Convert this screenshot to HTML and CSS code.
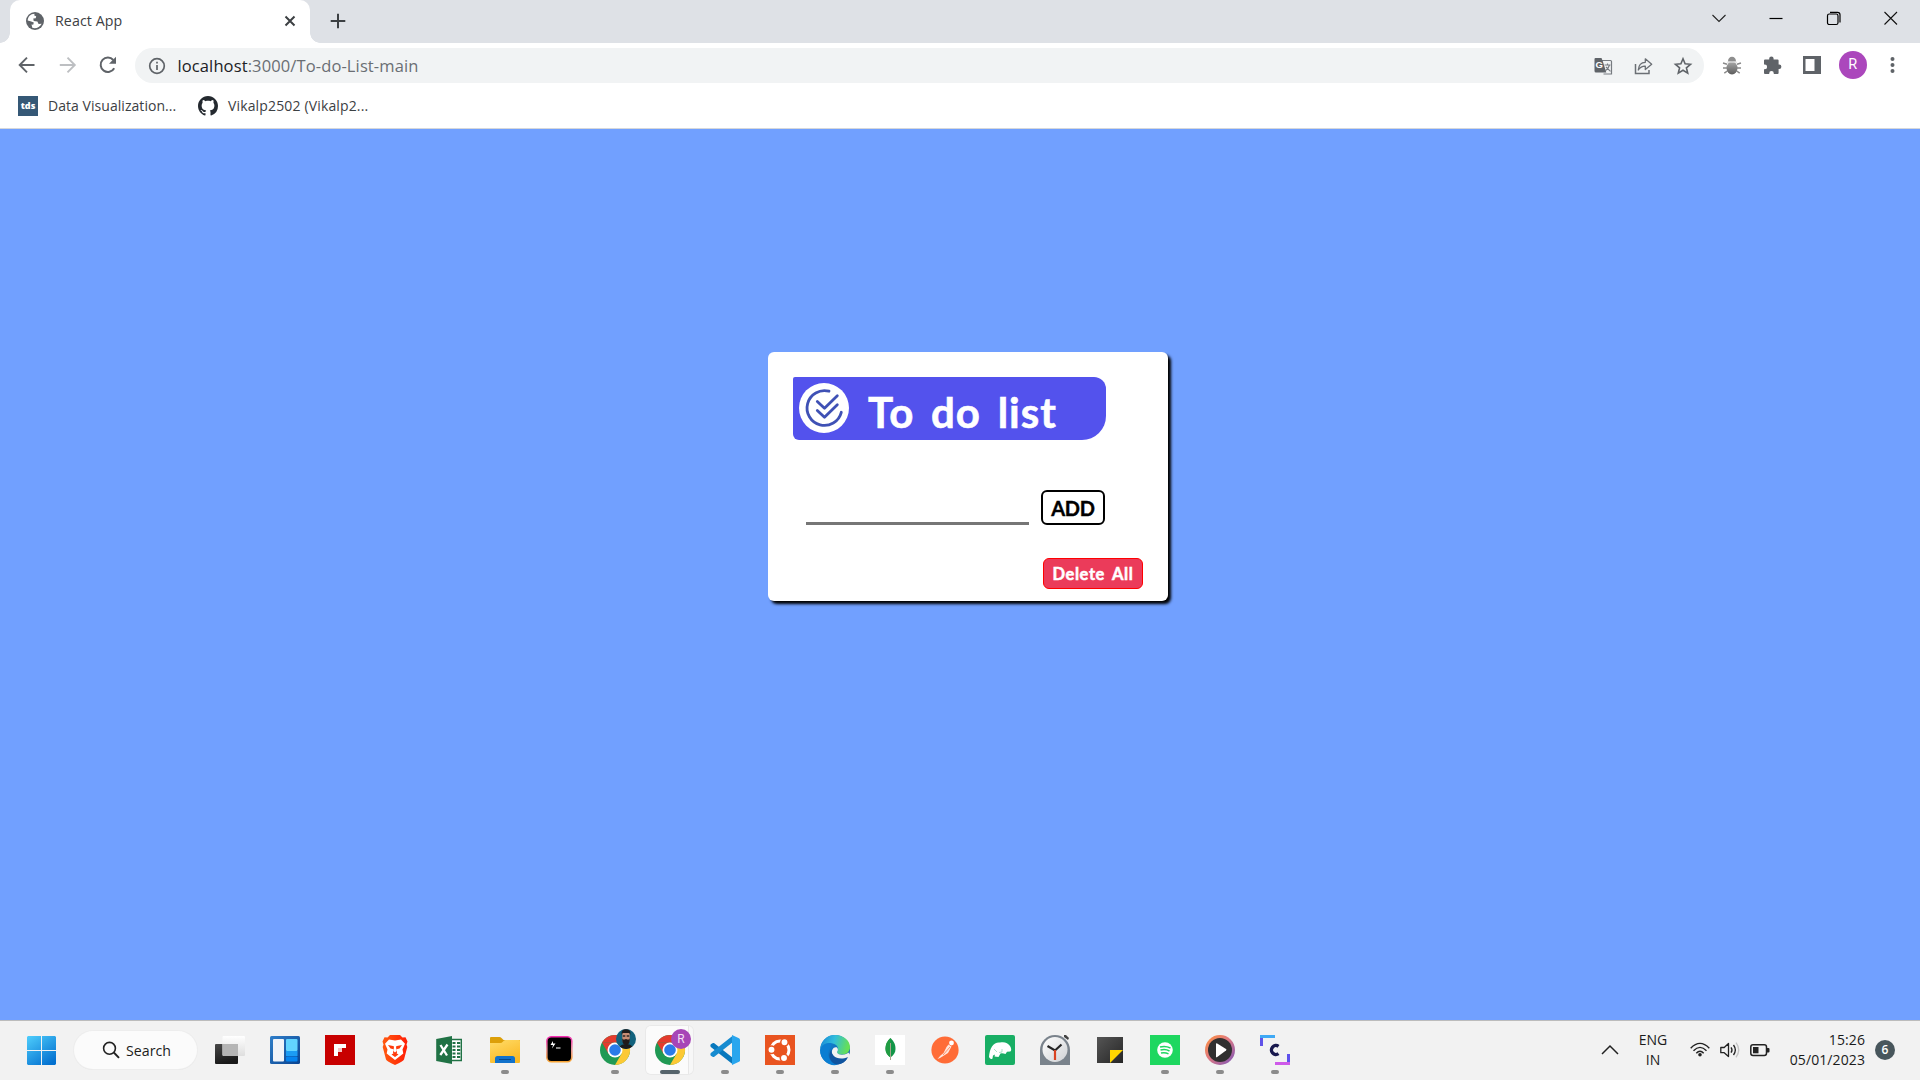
FILE: index.html
```html
<!DOCTYPE html>
<html lang="en">
<head>
<meta charset="utf-8">
<title>React App</title>
<link rel="stylesheet" href="styles.css">
</head>
<body>
<div class="screen">
  <header class="tabstrip">
    <div class="tab">
      <svg class="i20" viewBox="0 0 20 20"><circle cx="10" cy="10" r="9" fill="#5f6368"/><path d="M9.500 2.700C5.500 2.800 2.800 6 2.700 9.400L5.500 10.300 8.800 11.400 8.200 13.800 6.500 13.600 7.300 16.800C10.800 18 15 16.200 16.700 12.700L13.600 12.900 12.400 10.500 8.700 9.900 8.300 7.500 10.700 7.200 11.200 5.200 9.300 4.500Z" fill="#fff"/></svg>
      <span class="tab-title">React App</span>
      <svg class="tab-close" viewBox="0 0 12 12"><path d="M1.500 1.500l9 9M10.500 1.500l-9 9" stroke="#3c4043" stroke-width="2"/></svg>
    </div>
    <svg class="new-tab" viewBox="0 0 16 16"><path d="M8 .7v14.600M.7 8h14.600" stroke="#3c4043" stroke-width="2"/></svg>
    <div class="window-controls">
      <svg viewBox="0 0 16 16"><path d="M1.500 5l6.500 6.500L14.500 5" fill="none" stroke="#222" stroke-width="1.100"/></svg>
      <svg viewBox="0 0 16 16"><path d="M1.500 8.500h13" stroke="#000" stroke-width="1.200"/></svg>
      <svg viewBox="0 0 16 16"><rect x="1.500" y="4" width="10.500" height="10.500" rx="1.800" fill="none" stroke="#000" stroke-width="1.200"/><path d="M4 2.300h7.500a2.500 2.500 0 0 1 2.500 2.500V12.500" fill="none" stroke="#000" stroke-width="1.200"/></svg>
      <svg viewBox="0 0 16 16"><path d="M1.500 2l12.500 12.500M14 2L1.500 14.500" stroke="#111" stroke-width="1.100"/></svg>
    </div>
  </header>

  <nav class="toolbar">
    <div class="nav-buttons">
      <svg class="i20" viewBox="0 0 20 20"><path d="M17.500 10H3.200M10 2.700L2.700 10l7.300 7.300" fill="none" stroke="#5f6368" stroke-width="1.900"/></svg>
      <svg class="i20" viewBox="0 0 20 20"><path d="M1.800 10H16.500M9.500 2.700l7.300 7.300-7.300 7.300" fill="none" stroke="#bdbfc2" stroke-width="1.900"/></svg>
      <svg class="i20" viewBox="0 0 20 20"><path d="M16.200 13.200A7.200 7.200 0 1 1 15.300 5" fill="none" stroke="#5f6368" stroke-width="2"/><path d="M18 1.800v7H11z" fill="#5f6368"/></svg>
    </div>
    <div class="omnibox">
      <svg class="i20" viewBox="0 0 20 20"><circle cx="10" cy="10" r="7.300" fill="none" stroke="#5f6368" stroke-width="1.700"/><path d="M10 9v5M10 5.700v1.900" stroke="#5f6368" stroke-width="1.700"/></svg>
      <span class="url"><b>localhost</b>:3000/To-do-List-main</span>
      <div class="omni-actions">
        <svg class="i20" viewBox="0 0 20 20"><path d="M8 4.500h9.500a1 1 0 0 1 1 1V18h-8" fill="none" stroke="#777b80" stroke-width="1.200"/><path d="M2.500 2h6l1.200 3 3.600 11.500H3a1.500 1.500 0 0 1-1.500-1.500V3a1 1 0 0 1 1-1z" fill="#5f6368"/><path d="M11.500 9h6M14.500 7.500V9M16.500 9q-1 4-4.500 6M13 11l4.500 4.300" stroke="#777b80" stroke-width="1.100" fill="none"/><text x="2.400" y="12" class="g">G</text></svg>
        <svg class="i20" viewBox="0 0 20 20"><path d="M2.500 8v9.500h13.500v-3.500" fill="none" stroke="#6b6f74" stroke-width="1.500"/><path d="M5.300 14c.3-5 2.800-7.600 7-7.700V2.800L18.700 8.300 12.300 13.500V10.200C9 10 7 11.500 5.300 14z" fill="none" stroke="#6b6f74" stroke-width="1.300" stroke-linejoin="round"/></svg>
        <svg class="i20" viewBox="0 0 20 20"><path d="M10 2.800l2.100 5 5.400.5-4.100 3.500 1.300 5.300L10 14.300l-4.700 2.800 1.300-5.300-4.100-3.500 5.400-.5z" fill="none" stroke="#5f6368" stroke-width="1.600"/></svg>
      </div>
    </div>
    <div class="extensions">
      <svg class="i20" viewBox="0 0 20 20"><defs><linearGradient id="bug" x2="0" y2="1"><stop stop-color="#aaa"/><stop offset="1" stop-color="#5c5c5c"/></linearGradient></defs><path d="M1 8l4 1.200M1 13h4M2.300 18.200L6 15.500M19 8l-4 1.200M19 13h-4M17.700 18.200L14 15.500" stroke="#8a8a8a" stroke-width="1.500"/><path d="M6 6.500a4 4.800 0 0 1 8 0z" fill="#8e8e8e"/><ellipse cx="10" cy="13" rx="5.500" ry="6.500" fill="url(#bug)"/><path d="M5 7.200h10" stroke="#ddd"/></svg>
      <svg class="i20" viewBox="0 0 20 20"><path d="M3 4.500h4.200V3.600a2.200 2.200 0 0 1 4.400 0v.9h4a1 1 0 0 1 1 1v4h.6a2.200 2.200 0 0 1 0 4.400h-.6v4.200a1 1 0 0 1-1 1h-3.800v-.7a2.300 2.300 0 0 0-4.600 0v.7H3a1 1 0 0 1-1-1v-3.900h.8a2.300 2.300 0 0 0 0-4.600H2V5.500a1 1 0 0 1 1-1z" fill="#5f6368"/></svg>
      <svg class="i20" viewBox="0 0 20 20"><path d="M1 1h18v18H1zM3.500 4v12h9V4z" fill="#5f6368" fill-rule="evenodd"/></svg>
      <span class="profile">R</span>
      <svg class="i20" viewBox="0 0 20 20" fill="#5f6368"><circle cx="9.500" cy="4" r="2"/><circle cx="9.500" cy="10" r="2"/><circle cx="9.500" cy="16" r="2"/></svg>
    </div>
  </nav>

  <nav class="bookmarks">
    <a class="bookmark"><span class="tds">tds</span><span class="bm-data">Data Visualization...</span></a>
    <a class="bookmark"><svg class="i20" viewBox="0 0 16 16"><path fill="#24292f" d="M8 0C3.580 0 0 3.580 0 8c0 3.540 2.290 6.530 5.470 7.590.4.070.55-.17.55-.38 0-.19-.010-.82-.010-1.490-2.010.37-2.530-.49-2.690-.94-.09-.23-.48-.94-.82-1.130-.28-.15-.68-.52-.010-.53.63-.010 1.080.58 1.230.82.72 1.210 1.870.87 2.330.66.070-.52.28-.87.51-1.070-1.780-.2-3.640-.89-3.640-3.950 0-.87.31-1.590.82-2.150-.080-.2-.36-1.020.080-2.120 0 0 .67-.21 2.200.82.64-.18 1.320-.27 2-.27s1.360.09 2 .27c1.530-1.040 2.200-.82 2.200-.82.44 1.100.16 1.920.080 2.120.51.56.82 1.270.82 2.150 0 3.070-1.870 3.750-3.650 3.950.29.25.54.73.54 1.480 0 1.070-.010 1.930-.010 2.200 0 .21.15.46.55.38A8.010 8.010 0 0 0 16 8c0-4.420-3.580-8-8-8z"/></svg><span class="bm-git">Vikalp2502 (Vikalp2...</span></a>
  </nav>

  <main class="page">
    <section class="card">
      <div class="banner">
        <svg class="logo" viewBox="0 0 50 50"><circle cx="25" cy="25" r="25" fill="#fff"/><g fill="none" stroke="#3f51b5" stroke-width="2.800" stroke-linecap="round" stroke-linejoin="round"><path d="M30 8.200A17.400 17.400 0 1 0 42.300 29.300"/><path d="M18.300 18.500L25.500 25.300 38.300 12.800"/><path d="M18.300 27.500L25.500 34.300 38.300 21.800"/></g></svg>
        <h1>To do list</h1>
      </div>
      <div class="entry"><input class="item" type="text" aria-label="New item"><button class="add">ADD</button></div>
      <button class="delete">Delete All</button>
    </section>
  </main>

  <footer class="taskbar">
    <svg class="start" viewBox="0 0 29 29"><defs><linearGradient id="win" gradientUnits="userSpaceOnUse" x1="2" y1="0" x2="22" y2="29"><stop stop-color="#4ccbfb"/><stop offset="1" stop-color="#0471d0"/></linearGradient></defs><path d="M1 0h13v14H0V1zM15 0h13l1 1v13H15zM0 15h14v14H1l-1-1zM15 15h14v13l-1 1H15z" fill="url(#win)"/></svg>
    <div class="search"><svg viewBox="0 0 18 18"><circle cx="7.500" cy="7.300" r="5.900" fill="none" stroke="#222" stroke-width="1.600"/><path d="M11.800 11.500l5.200 5.300" stroke="#222" stroke-width="1.900"/></svg><span>Search</span></div>
    <div class="apps">
      <div class="app"><svg viewBox="0 0 30 30"><defs><linearGradient id="tv" x2=".3" y2="1"><stop stop-color="#484848"/><stop offset="1" stop-color="#191919"/></linearGradient><linearGradient id="tl" x2="0" y2="1"><stop stop-color="#fff"/><stop offset="1" stop-color="#dedede"/></linearGradient></defs><rect x="0" y="9" width="23" height="20" rx="1" fill="url(#tv)"/><rect x="7.500" y="1" width="22.500" height="20" rx="1" fill="url(#tl)"/><path d="M7.500 9H23v12H8.500l-1-1z" fill="#b5b5b5"/></svg></div>
      <div class="app"><svg viewBox="0 0 30 30"><defs><linearGradient id="wg" x2="1" y2="1"><stop stop-color="#2f7fca"/><stop offset="1" stop-color="#0a4390"/></linearGradient></defs><rect y="1" width="30" height="28" rx="1.500" fill="url(#wg)"/><rect x="3" y="4" width="11" height="22.500" rx="1" fill="#f0f3f8"/><rect x="16" y="4" width="11.500" height="12" rx="1" fill="#62d5ff"/><path d="M16 16h11.500v5H16z" fill="#1b9cf4"/><rect x="16" y="21.500" width="11.500" height="5" rx="1" fill="#0583ee"/></svg></div>
      <div class="app"><svg viewBox="0 0 30 30"><path fill="#c80000" d="M0 0h30v30H0z"/><path fill="#fff" d="M9 9h12v4H17v4h-4v4H9z"/><path fill="#f5c5c5" d="M13 13h4v4h-4z"/></svg></div>
      <div class="app"><svg viewBox="0 0 30 30"><defs><linearGradient id="br"><stop stop-color="#ff5a10"/><stop offset="1" stop-color="#ff1d06"/></linearGradient></defs><path d="M10 0h10l2.500 2.600 3-.3 2 4.200-1 3 .8 2.500-3.300 12.500q-.6 1.500-9 5.500-8.400-4-9-5.500L2.700 12l.8-2.500-1-3 2-4.200 3 .3z" fill="url(#br)"/><path d="M9 4.500l6 1 6-1 4 4.200-2.500 5.800.8 4-2.800 2.200L15 25l-5.500-4.300-2.800-2.200.8-4L5 8.700z" fill="#fff"/><path d="M8 10l5 .9 1 .6-.5 4.500 1.500 1.500 1.500-1.500-.5-4.500 1-.6 5-.9-2.500 3.600-3 .6.500 3.800-2 1.500-2-1.500.5-3.800-3-.6zM11.500 19.500L15 17.500l3.500 2L15 22z" fill="#ff3b0c"/></svg></div>
      <div class="app"><svg viewBox="0 0 30 30"><path d="M16 4.500h10.300v21H16z" fill="#fff" stroke="#207245" stroke-width="1.400"/><path d="M17.500 8h3M22 8h3.300M17.500 11.500h3M22 11.500h3.300M17.500 15h3M22 15h3.300M17.500 18.500h3M22 18.500h3.300M17.500 22h3M22 22h3.300" stroke="#207245" stroke-width="1.900"/><path d="M1.200 4L17 1v28L1.200 26z" fill="#207245"/><path d="M5.500 10l6.500 10.500M12.500 9.500L5.300 20" stroke="#fff" stroke-width="2.300"/></svg></div>
      <div class="app open"><svg viewBox="0 0 30 30"><defs><linearGradient id="fd" x2=".5" y2="1"><stop stop-color="#ffdc69"/><stop offset="1" stop-color="#fbba26"/></linearGradient></defs><path d="M0 3q0-1 1-1h8.500q1 0 2 1l2 2H30v10H0z" fill="#dc9f09"/><path d="M0 8h10q2 0 3-1.500T15.500 5H29q1 0 1 1v21q0 1-1 1H1q-1 0-1-1z" fill="url(#fd)"/><path d="M5 28v-4.500Q5 21 7.500 21h15q2.500 0 2.500 2.500V28z" fill="#1272cb"/><path d="M9 24.500h12" stroke="#07498c"/></svg></div>
      <div class="app"><svg viewBox="0 0 30 30"><defs><linearGradient id="tm" x2="0" y2="1"><stop stop-color="#f62cb2"/><stop offset=".5" stop-color="#e99aa0"/><stop offset="1" stop-color="#f7a332"/></linearGradient></defs><rect x="1.800" y="1.800" width="25" height="25" rx="4.500" stroke="url(#tm)" stroke-width="1.600"/><path d="M8 6l-2.500 4h2.500l-1 3.500 3.500-5H8z" fill="#fff"/><path d="M11 13h4.500" stroke="#ddd" stroke-width="1.200"/></svg></div>
      <div class="app open"><svg viewBox="0 0 30 30"><defs><g id="chrome"><circle cx="15" cy="15" r="15" fill="#209954"/><path d="M2 7.500A15 15 0 0 1 28 7.500H15z" fill="#e33b2e"/><path d="M2 7.500L8.500 18.700 15 15V7.500z" fill="#e33b2e"/><path d="M28 7.500A15 15 0 0 1 15 30l6.500-11.300L19 7.500z" fill="#fcc934"/><circle cx="15" cy="15" r="7.500" fill="#fff"/><circle cx="15" cy="15" r="5.800" fill="#2a7be9"/></g></defs><use href="#chrome"/><circle cx="26" cy="4" r="10" fill="#12627d"/><path d="M19.500 11.600q2-2.300 6.500-2.600t6.500 2.600A10 10 0 0 1 19.500 11.600z" fill="#1c1c1c"/><path d="M22.300-3h7.400v8q-.7 4-3.700 4t-3.700-4z" fill="#c98d74"/><path d="M21.700 0q-1-5.700 4.300-5.700T30.300 0L29.300-2h-6.600z" fill="#201b1b"/><path d="M22.300 3.500l1.500 1.200 2.200-.6 2.200.6 1.500-1.200V6q-.7 4-3.700 4t-3.700-4z" fill="#201b1b"/><path d="M22.800 1h2.500M26.700 1h2.500" stroke="#302725" stroke-width="1.300"/></svg></div>
      <div class="app open active"><svg viewBox="0 0 30 30"><use href="#chrome"/><circle cx="26" cy="4" r="10" fill="#a745b7"/><text x="26" y="8.400" class="avatar-letter">R</text></svg></div>
      <div class="app open"><svg viewBox="0 0 30 30"><path d="M.8 9.300L3 8q.7-.3 1.300.2L23 23v6.500L.8 12q-1-1 0-2.700z" fill="#0878bd"/><path d="M.8 20.700L3 22q.7.300 1.300-.2L23 7V.5L.8 18q-1 1 0 2.700z" fill="#168bd0"/><path d="M22 0l7 3.200q1 .5 1 1.500v20.600q0 1-1 1.500L22 30z" fill="#29a6ee"/></svg></div>
      <div class="app open"><svg viewBox="0 0 30 30"><path fill="#e95420" d="M0 0h30v30H0z"/><circle cx="15" cy="15" r="9" fill="none" stroke="#fff" stroke-width="3"/><g fill="#fff" stroke="#e95420" stroke-width="1.500"><circle cx="6.500" cy="14.800" r="3.700"/><circle cx="19.500" cy="7.300" r="3.700"/><circle cx="19" cy="23" r="3.700"/></g></svg></div>
      <div class="app open"><svg viewBox="0 0 30 30"><defs><linearGradient id="eg" x2="1" y2=".2"><stop stop-color="#1686d6"/><stop offset=".5" stop-color="#31bddc"/><stop offset="1" stop-color="#65df58"/></linearGradient><linearGradient id="ed" x2="1" y2="1"><stop stop-color="#1595df"/><stop offset="1" stop-color="#0b4b9e"/></linearGradient></defs><circle cx="15" cy="15" r="15" fill="url(#ed)"/><path d="M.5 13C2 4 8 0 15 0c9 0 15 6 15 12 0 5-3.500 7.500-8 7.500-4 0-5-1.500-5-2.500 1.500-1.500 1.500-5-1-7C10 6.500 3 8 .5 13z" fill="url(#eg)"/><path d="M11 12C5 19 10 29 18 29.500 11 32 2 27 .5 18 0 10 7 8 11 8.300z" fill="#0b7ed2"/><path d="M17 17c0 1.500 2 2.700 5 2.700 3 0 5.500-1 6.500-2.200l1.500 2.500-2 3.500q-5 2.500-10 1c-5-1.700-7.500-6.500-5.500-10 1-1.800 2.500-2.500 4.500-2 1.500 1.500 1 3.500 0 4.500z" fill="#f2f2f2"/><path d="M11.500 14.500c-1 6 6.500 12 16.500 7.500-3 6-8 8-13 7-6-3-7-10-3.500-14.500z" fill="#10549f"/></svg></div>
      <div class="app open"><svg viewBox="0 0 30 30"><path d="M0 0h30v30H0z" fill="#fff"/><path d="M15.500 3c4 4 5 7 5 11 0 4-2 6-5 8.500-3-2.500-5-4.500-5-8.500 0-4 1-7 5-11z" fill="#139548"/><path d="M15.500 3q-5 4-5 11 0 5 5 8.500z" fill="#219c43"/><path d="M15.500 8v17" stroke="#a6a58b" stroke-width="1"/></svg></div>
      <div class="app"><svg viewBox="0 0 30 30"><circle cx="15" cy="15" r="13.600" fill="#ff6c37"/><circle cx="21.500" cy="8" r="2.400" fill="#fff"/><path d="M18.500 9.500l3 2-3.500 6.500-8 5-2.500 1 3-3.500 3-2.500 3-6z" fill="#ffe5db"/><path d="M13 20l7-8" stroke="#ff6c37" stroke-width=".7"/></svg></div>
      <div class="app"><svg viewBox="0 0 30 30"><rect width="30" height="30" rx="2" fill="#18ae64"/><path d="M4 22q.5-7 3-10.500c2-3 5-4.500 8-4 4-1 8 0 10 3.500 1 1.500 2 4.500.3 5.500l-3.300.2-1.500 2.300q-3-1-5-.5l-2 3.500-4-.5.500-2-2 1-.5 3q-2 1.500-3.500-1.500z" fill="#fff"/><path d="M9 14l3 3M17 14v3l-3 .5" stroke="#8bd6b0" fill="none" stroke-width=".7"/></svg></div>
      <div class="app"><svg viewBox="0 0 30 30"><defs><linearGradient id="ck" x2="1" y2="1"><stop stop-color="#fff"/><stop offset="1" stop-color="#cfd1d4"/></linearGradient></defs><path d="M24 0l2 0 3 3-1 2-4-3z" fill="#424242"/><path d="M0 15A15 15 0 0 1 30 15v15H0z" fill="#7a838c"/><circle cx="15" cy="14.500" r="12.500" fill="url(#ck)"/><path d="M7.500 11l7.500 4.500 6.500-6" stroke="#252525" stroke-width="2.200" fill="none"/><path d="M15 15v10" stroke="#d94321" stroke-width="2.200"/></svg></div>
      <div class="app"><svg viewBox="0 0 30 30"><defs><linearGradient id="sn" x2="1" y2="1"><stop stop-color="#555"/><stop offset="1" stop-color="#262626"/></linearGradient></defs><path d="M2 2h26v26H2z" fill="url(#sn)"/><path d="M15 15h13L15 28z" fill="#ffd600"/></svg></div>
      <div class="app open"><svg viewBox="0 0 30 30"><path d="M0 0h30v30H0z" fill="#1ed760"/><circle cx="15" cy="15" r="7.800" fill="#fff"/><path d="M10 12q5.500-1.500 10.500 1M10.500 15q5-1.500 9 1M11 18q4-1 7.500.8" fill="none" stroke="#1ed760" stroke-width="1.500"/></svg></div>
      <div class="app open"><svg viewBox="0 0 30 30"><defs><linearGradient id="mp" x2="1" y2="1"><stop stop-color="#ff9138"/><stop offset=".45" stop-color="#df7982"/><stop offset="1" stop-color="#7853bc"/></linearGradient></defs><circle cx="15" cy="15" r="15" fill="url(#mp)"/><circle cx="15" cy="15" r="12" fill="#303030"/><path d="M11 9q0-1.200 1.200-.5L21 14q1 .8 0 1.600L12.200 22q-1.200.7-1.200-.6z" fill="#fff"/></svg></div>
      <div class="app open"><svg viewBox="0 0 30 30"><path d="M0 10V0h15v3H3v7z" fill="#3fa9f5"/><path d="M0 3h3v8H0z" fill="#6052e8"/><path d="M15 27h12v-8h3v11H15z" fill="#ce5ae9"/><path d="M27 19h3v8h-3z" fill="#5e51ed"/><path d="M18.500 11.300A4.500 4.500 0 1 0 18.500 18.700" fill="none" stroke="#19194e" stroke-width="3.400"/></svg></div>
    </div>
    <div class="tray">
      <svg class="up" viewBox="0 0 18 10"><path d="M1 9l8-8 8 8" fill="none" stroke="#222" stroke-width="1.500"/></svg>
      <div class="lang"><span>ENG</span><span>IN</span></div>
      <div class="status">
        <svg viewBox="0 0 20 20"><g fill="none" stroke="#222" stroke-width="1.400"><path d="M.7 8.200Q10-1.500 19.300 8.200M3.500 10.800Q10 4 16.500 10.800M6.300 13.300Q10 9.300 13.700 13.300"/></g><circle cx="10" cy="14.700" r="1.800" fill="#222"/></svg>
        <svg viewBox="0 0 20 20"><path d="M.8 7.500h3.400L8.500 3.500v13L4.200 12.700H.8z" fill="none" stroke="#222" stroke-width="1.300" stroke-linejoin="round"/><path d="M11 7.300q2 2.700 0 5.400M13.500 5q3.700 5 0 10" fill="none" stroke="#222" stroke-width="1.300"/><path d="M16 2.700q5.500 7.300 0 14.600" fill="none" stroke="#c4c4c4" stroke-width="1.300"/></svg>
        <svg viewBox="0 0 20 20"><rect x=".8" y="4.800" width="15.700" height="10.700" rx="2.200" fill="none" stroke="#222" stroke-width="1.500"/><rect x="3" y="7" width="5.500" height="6.300" fill="#222"/><path d="M16.500 8h2q1 0 1 1v2.500q0 1-1 1h-2z" fill="#222"/></svg>
      </div>
      <div class="clock"><span class="time">15:26</span><span>05/01/2023</span></div>
      <span class="badge">6</span>
    </div>
  </footer>
</div>
</body>
</html>
```
FILE: styles.css
```css
* { box-sizing: border-box; }
body { margin: 0; font-family: "Segoe UI", "Open Sans", sans-serif; overflow: hidden; }
svg { display: block; flex: none; overflow: visible; }
.screen { width: 1920px; height: 1080px; display: flex; flex-direction: column; background: #fff; }
.i20 { width: 20px; height: 20px; }

.tabstrip { height: 43px; background: #dee1e6; display: flex; padding-left: 10px; }
.tab { position: relative; width: 300px; height: 43px; background: #fff; border-radius: 10px 10px 0 0; display: flex; align-items: center; padding: 0 14px 1px 15px; }
.tab::before, .tab::after { content: ""; position: absolute; bottom: 0; width: 10px; height: 10px; }
.tab::before { left: -10px; background: radial-gradient(circle at 0 0, transparent 9.5px, #fff 10px); }
.tab::after { right: -10px; background: radial-gradient(circle at 100% 0, transparent 9.5px, #fff 10px); }
.tab-title { margin: -1px 0 0 10px; font-size: 14.200px; color: #3c4043; flex: 1; letter-spacing: .1px; }
.tab-close { width: 12px; height: 12px; }
.new-tab { width: 16px; height: 16px; margin: 13px 0 0 19.500px; }
.window-controls { margin-left: auto; display: flex; gap: 41.300px; padding: 10px 21px 0 0; }
.window-controls svg { width: 16px; height: 16px; }

.toolbar { height: 45px; display: flex; align-items: center; padding: 0 17px 1px 17px; }
.nav-buttons { display: flex; gap: 20.500px; width: 118px; }
.omnibox { width: 1570px; height: 35px; margin-top: 1px; border-radius: 18px; background: #f1f3f4; display: flex; align-items: center; padding: 0 11.500px 0 12px; }
.url { margin-left: 10.500px; font-size: 16.500px; letter-spacing: .12px; color: #6a6e73; white-space: nowrap; }
.url b { font-weight: 400; color: #202124; }
.omni-actions { margin-left: auto; display: flex; gap: 20px; }
.g { font: bold 9.500px "Liberation Sans", sans-serif; fill: #fff; }
.extensions { display: flex; align-items: center; gap: 20.300px; margin-left: 17.500px; }
.profile { width: 28px; height: 28px; margin: 0 -4px; border-radius: 50%; background: #ab47bc; color: #fff; font: 14.500px/28px Roboto, sans-serif; text-align: center; }

.bookmarks { height: 41px; display: flex; gap: 22px; padding: 0 0 5px 18px; align-items: center; border-bottom: 1px solid #d5d7db; }
.bookmark { display: flex; align-items: center; gap: 10px; font-size: 14px; color: #3c4043; white-space: nowrap; }
.bm-data { width: 128px; letter-spacing: .05px; }
.bm-git { letter-spacing: .15px; }
.tds { width: 20px; height: 20px; background: #355876; color: #fff; font-size: 9px; font-weight: 800; line-height: 19px; text-align: center; }

.page { height: 891px; background: #71a0ff; padding: 223px 0 0 768px; }
.card { width: 400px; height: 249px; padding: 25px; background: #fff; border-radius: 6px; box-shadow: 3px 3px 3px #000; font-family: "Comic Sans MS", Lato, sans-serif; }
.banner { width: 313px; height: 63px; padding-left: 6px; background: #5352ed; border-radius: 2px 12px 24px 6px; display: flex; align-items: center; }
.logo { width: 50px; height: 50px; margin-bottom: 1px; }
.banner h1 { margin: 6px 0 0 19px; font-size: 42px; line-height: 50px; font-weight: 700; color: #fff; letter-spacing: 1px; word-spacing: 5.500px; white-space: nowrap; -webkit-text-stroke: .6px #fff; }
.entry { display: flex; gap: 12px; margin: 50px 0 0 13px; }
.item { width: 223px; height: 35px; padding: 0; border: 0; border-bottom: 3px solid #767676; background: none; }
.add, .delete { display: block; padding: 0; font-family: inherit; font-weight: 700; white-space: nowrap; }
.add { width: 64px; height: 35px; border: 2px solid #000; border-radius: 6px; background: #fff; color: #000; font-size: 20px; letter-spacing: -.3px; -webkit-text-stroke: .4px #000; }
.delete { width: 100px; height: 31px; margin: 33px 0 0 auto; border: 1px solid #f00; border-radius: 6px; background: #eb3b5a; color: #fff; font-size: 16.500px; letter-spacing: .6px; word-spacing: 3px; -webkit-text-stroke: .5px #fff; }

.taskbar { height: 60px; background: #f2f2f2; border-top: 1px solid #bcbcbc; display: flex; align-items: center; padding: 0 25px 1px 27px; color: #1b1b1b; }
.start { width: 29px; height: 29px; }
.search { width: 123px; height: 38px; margin-left: 18px; border-radius: 19px; background: #fbfbfb; box-shadow: 0 0 0 1px #ededed, 0 1px 0 #ddd; display: flex; align-items: center; padding-left: 28px; font-size: 14.200px; gap: 6px; }
.search svg { width: 18px; height: 18px; }
.apps { display: grid; grid-template-columns: repeat(20, 55px); margin-left: 5px; height: 58px; }
.app { position: relative; display: grid; place-items: center; }
.app > svg { width: 30px; height: 30px; z-index: 1; }
.app.open::after { content: ""; position: absolute; bottom: 5px; left: 24px; width: 8px; height: 4px; border-radius: 2px; background: #8b8b8b; }
.app.active::before { content: ""; position: absolute; left: 4px; top: 5px; width: 47px; height: 48px; border-radius: 5px; background: linear-gradient(90deg, #fbfbfb 42px, #e7e7e7 42px, #e7e7e7 43px, #f7f7f7 43px); box-shadow: 0 0 0 1px #e9e9e9; }
.app.active::after { left: 18px; width: 20px; background: #56646b; }
.avatar-letter { font: 12px Roboto, sans-serif; fill: #f1dff4; text-anchor: middle; }
.tray { margin-left: auto; display: flex; align-items: center; font-size: 14px; line-height: 20px; }
.up { width: 18px; height: 10px; }
.lang { display: flex; flex-direction: column; align-items: center; margin-left: 17px; width: 34px; }
.status { display: flex; gap: 10px; margin-left: 20px; }
.status svg { width: 20px; height: 20px; }
.clock { display: flex; flex-direction: column; align-items: flex-end; width: 85px; margin-left: 10px; letter-spacing: .1px; }
.badge { width: 20px; height: 20px; margin-left: 10px; border-radius: 50%; background: #48565c; color: #fff; font-size: 12px; font-weight: 600; text-align: center; }
```
